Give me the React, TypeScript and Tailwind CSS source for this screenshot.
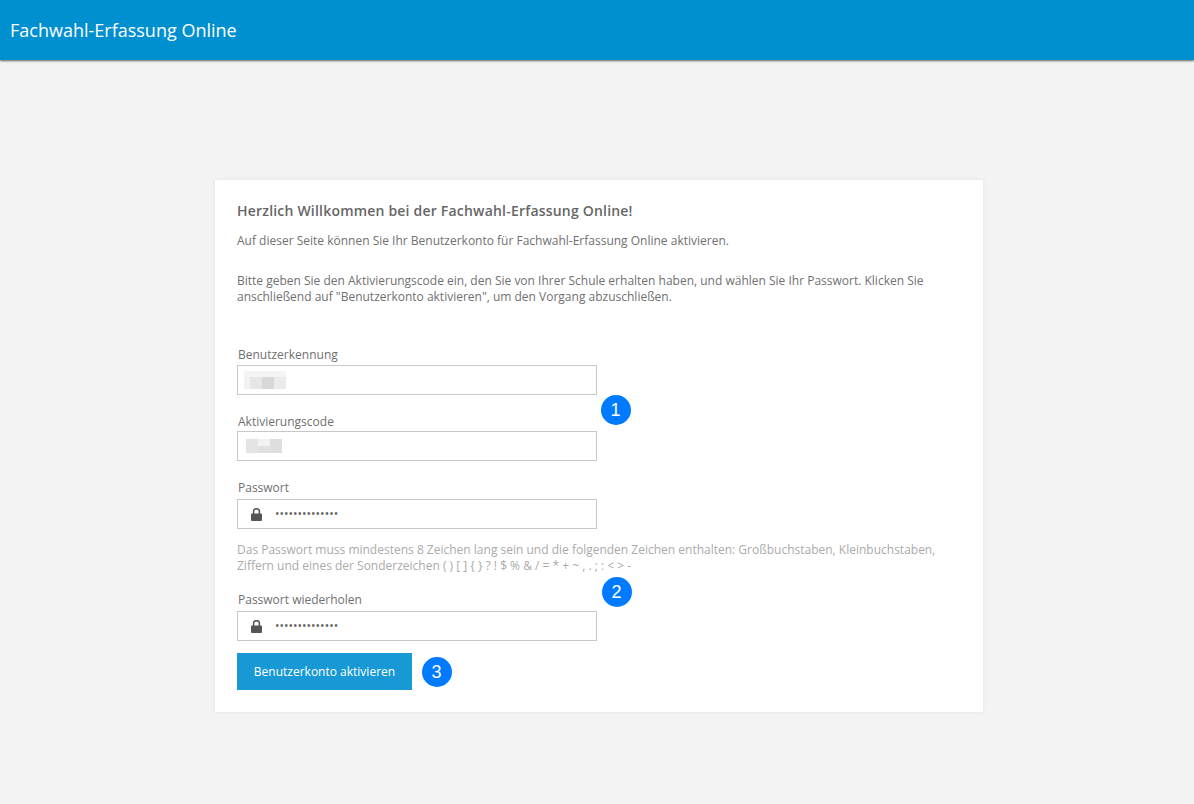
const font = { fontFamily: '"Open Sans", sans-serif' }

function Field({ label, children, className, gap }: { label: string; children: React.ReactNode; className: string; gap: string }) {
  return (
    <div className={className}>
      <label className="block pl-px text-[12px] leading-[16px] text-[#707070]">{label}</label>
      <div className={'flex h-[30px] w-[360px] items-center border border-[#c8c8c8] bg-white ' + gap}>{children}</div>
    </div>
  )
}

function PasswordValue() {
  return (
    <>
      <svg width="11" height="13" viewBox="0 0 11 13" className="ml-[13px] shrink-0">
        <path d="M2.6 6V3.6a2.9 2.9 0 0 1 5.8 0V6" fill="none" stroke="#555" strokeWidth="1.5" />
        <rect x="0" y="5.5" width="11" height="7.5" rx="1" fill="#555" />
      </svg>
      <input
        type="password"
        readOnly
        value="abcdefghijklmn"
        className="ml-[13px] min-w-0 flex-1 bg-transparent text-[12px] text-[#666] outline-none"
      />
    </>
  )
}

function Badge({ n, className }: { n: number; className: string }) {
  return (
    <div
      style={{ fontFamily: '"Liberation Sans", sans-serif' }}
      className={'absolute flex h-[30px] w-[30px] items-center justify-center rounded-full bg-[#007bff] pr-px text-[18px] text-white ' + className}
    >
      {n}
    </div>
  )
}

export default function App() {
  return (
    <div style={font} className="min-h-[804px] bg-[#f3f3f3]">
      {/* Header */}
      <header className="flex h-[60px] items-center bg-[#0090d0] pl-[10px] shadow-[0_1px_2px_rgba(0,0,0,0.6)]">
        <h1 className="text-[18px] text-white">Fachwahl-Erfassung Online</h1>
      </header>

      {/* Card */}
      <div className="relative ml-[215px] mt-[120px] h-[532px] w-[768px] bg-white px-[22px] pt-[22px] shadow-[0_0_4px_rgba(0,0,0,0.08)]">
        <h2 className="text-[14px] font-semibold leading-[18px] tracking-[0.2px] text-[#666]">
          Herzlich Willkommen bei der Fachwahl-Erfassung Online!
        </h2>
        <p className="mt-[13px] text-[12px] leading-[16px] text-[#707070]">
          Auf dieser Seite können Sie Ihr Benutzerkonto für Fachwahl-Erfassung Online aktivieren.
        </p>
        <p className="mt-[24px] text-[12px] leading-[16px] text-[#707070]">
          Bitte geben Sie den Aktivierungscode ein, den Sie von Ihrer Schule erhalten haben, und wählen Sie Ihr Passwort. Klicken Sie
          anschließend auf "Benutzerkonto aktivieren", um den Vorgang abzuschließen.
        </p>

        <Field label="Benutzerkennung" className="mt-[42px]" gap="mt-[2px]">
          <div className="ml-[6px] flex flex-col">
            <div className="h-[6px] w-[42px] bg-[#f4f4f4]" />
            <div className="flex h-[12px]">
              <div className="w-[6px] bg-[#f2f2f2]" />
              <div className="w-[12px] bg-[#e6e6e6]" />
              <div className="w-[12px] bg-[#d8d8d8]" />
              <div className="w-[12px] bg-[#ebebeb]" />
            </div>
          </div>
        </Field>
        <Field label="Aktivierungscode" className="mt-[19px]" gap="mt-px">
          <div className="ml-[8px] flex h-[14px]">
            <div className="w-[12px] bg-[#e4e4e4]" />
            <div className="flex w-[12px] flex-col">
              <div className="h-[7px] bg-[#f2f2f2]" />
              <div className="h-[7px] bg-[#e0e0e0]" />
            </div>
            <div className="w-[12px] bg-[#dedede]" />
          </div>
        </Field>
        <Field label="Passwort" className="mt-[19px]" gap="mt-[3px]">
          <PasswordValue />
        </Field>
        <p className="mt-[13px] text-[12px] leading-[16px] text-[#aaa]">
          {'Das Passwort muss mindestens 8 Zeichen lang sein und die folgenden Zeichen enthalten: Großbuchstaben, Kleinbuchstaben, Ziffern und eines der Sonderzeichen ( ) [ ] { } ? ! $ % & / = * + ~ , . ; : < > -'}
        </p>
        <Field label="Passwort wiederholen" className="mt-[18px]" gap="mt-[3px]">
          <PasswordValue />
        </Field>
        <button className="mt-[12px] h-[37px] w-[175px] bg-[#1899d6] text-[12px] text-white">Benutzerkonto aktivieren</button>

        {/* Annotations */}
        <Badge n={1} className="left-[386px] top-[215px]" />
        <Badge n={2} className="left-[387px] top-[397px]" />
        <Badge n={3} className="left-[207px] top-[477px]" />
      </div>
    </div>
  )
}
